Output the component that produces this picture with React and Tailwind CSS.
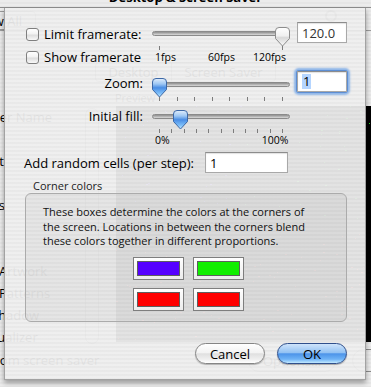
import React from 'react';

// screen saver cells seen through the sheet (deterministic pseudo random)
const cells = (() => {
  const out = [];
  let s = 7;
  const rnd = () => {
    s = (s * 16807) % 2147483647;
    return s / 2147483647;
  };
  for (let i = 0; i < 170; i++) {
    const x = Math.floor(rnd() * 255);
    const y = Math.floor(rnd() * 234);
    const top = y < 117;
    const right = x > 127;
    const color = top ? (right ? '#22dd22' : '#5522ff') : '#ee2222';
    out.push({ x, y, color, w: rnd() > 0.6 ? 2 : 1 });
  }
  return out;
})();

const tickList = (n) => Array.from({ length: n }, (_, i) => Math.round((i * 123) / (n - 1)));

const Checkbox = () => (
  <span className="block w-[13px] h-[13px] shrink-0 rounded-[3px] border border-[#7f7f7f] bg-[linear-gradient(#ffffff_0%,#f2f2f2_45%,#dddddd_55%,#f8f8f8_100%)]" />
);

const Thumb = ({ blue }) => (
  <svg width="15" height="20" viewBox="0 0 15 20" className="block">
    <defs>
      <linearGradient id={blue ? 'thumbBlue' : 'thumbGray'} x1="0" y1="0" x2="0" y2="1">
        {blue ? (
          <>
            <stop offset="0" stopColor="#e2eefc" />
            <stop offset="0.3" stopColor="#9cc6f3" />
            <stop offset="0.5" stopColor="#4a8de4" />
            <stop offset="0.8" stopColor="#7cbef9" />
            <stop offset="1" stopColor="#c8ecff" />
          </>
        ) : (
          <>
            <stop offset="0" stopColor="#ffffff" />
            <stop offset="0.45" stopColor="#f0f0f0" />
            <stop offset="0.55" stopColor="#d8d8d8" />
            <stop offset="1" stopColor="#fafafa" />
          </>
        )}
      </linearGradient>
    </defs>
    <path
      d="M0.5 4 Q0.5 0.5 4 0.5 H11 Q14.5 0.5 14.5 4 V11.5 L7.5 19 L0.5 11.5 Z"
      fill={blue ? 'url(#thumbBlue)' : 'url(#thumbGray)'}
      stroke={blue ? '#3d68a6' : '#8c8c8c'}
    />
  </svg>
);

const Slider = ({ value, ticks, blue }) => (
  <div className="relative w-[138px] h-[25px] shrink-0">
    <div className="absolute left-0 right-0 top-[5px] h-[5px] rounded-full border border-[#8a8a8a] bg-[linear-gradient(#8e8e8e,#b4b4b4_50%,#dadada)]" />
    {ticks.map((t, i) => (
      <div key={i} className="absolute top-[20px] w-px h-[4px] bg-[#7c7c7c]" style={{ left: 7 + t }} />
    ))}
    <div className="absolute top-[1px]" style={{ left: Math.round(value * 123) }}>
      <Thumb blue={blue} />
    </div>
  </div>
);

const Field = ({ children, className = '' }) => (
  <div
    className={`h-[21px] shrink-0 bg-white border border-[#a8a8a8] border-t-[#8c8c8c] shadow-[inset_0_1px_1px_rgba(0,0,0,0.12)] flex items-center pl-[4px] text-[13px] ${className}`}
  >
    {children}
  </div>
);

const Well = ({ className }) => (
  <div className="h-[23px] border border-[#7e7e7e] bg-[linear-gradient(#ffffff,#ececec)] p-[3px]">
    <div className={`h-full border border-[#5e5e5e] ${className}`} />
  </div>
);

export default function App() {
  return (
    <div className="relative w-[371px] h-[387px] overflow-hidden font-['Open_Sans',sans-serif] text-black bg-[repeating-linear-gradient(180deg,#ececec_0px,#ececec_2px,#e6e6e6_2px,#e6e6e6_4px)]">
      {/* window behind the sheet */}
      <div className="absolute inset-0 text-[13px] leading-[18px] whitespace-nowrap">
        <div className="absolute top-[-12px] left-0 right-0 text-center font-bold">Desktop &amp; Screen Saver</div>
        <div className="absolute left-0 right-0 top-[7px] h-px bg-[#8e8e8e]" />
        <div className="absolute left-0 right-0 top-[30px] h-px bg-[#9c9c9c]" />

        <div className="absolute left-[-30px] top-[11px] w-[66px] h-[19px] rounded-[4px] border border-[#9a9a9a] flex items-center justify-end pr-[13px]">
          Show All
        </div>
        <div className="absolute left-[325px] top-[10px] w-[12px] h-[12px] rounded-full border-2 border-[#777]" />

        <div className="absolute left-[95px] top-[62px] w-[181px] h-[20px] rounded-[4px] border border-[#8c8c8c] flex">
          <div className="w-[76px] border-r border-[#8c8c8c] flex items-center justify-center">Desktop</div>
          <div className="flex-1 flex items-center justify-center">Screen Saver</div>
        </div>
        <div className="absolute left-[115px] top-[89px] text-[11px]">Preview</div>

        <div className="absolute left-[116px] top-[106px] w-[300px] h-[236px] bg-black">
          {cells.map((c, i) => (
            <span
              key={i}
              className="absolute h-px"
              style={{ left: c.x, top: c.y, width: c.w, background: c.color }}
            />
          ))}
        </div>

        <div className="absolute left-[85px] top-[108px] w-[14px] h-[236px] rounded-[7px] border border-[#8a8a8a]" />
        <span className="absolute right-[319px] top-[108px]">Computer Name</span>
        <span className="absolute right-[367px] top-[152px]">Abstract</span>
        <span className="absolute right-[366px] top-[196px]">Cosmos</span>
        <span className="absolute left-[-1px] top-[262px]">Artwork</span>
        <span className="absolute left-[-1px] top-[284px]">Patterns</span>
        <span className="absolute left-[-9px] top-[306px]">Shadow</span>
        <span className="absolute left-[-20px] top-[328px]">Visualizer</span>
        <span className="absolute left-[-55px] top-[351px]">Use random screen saver</span>

        <div className="absolute left-[248px] top-[350px] w-[88px] h-[22px] rounded-full border border-[#8a8a8a] flex items-center justify-center">
          Options…
        </div>
        <div className="absolute left-[352px] top-[349px] w-[70px] h-[23px] rounded-full border border-[#8a8a8a]" />
      </div>

      {/* sheet */}
      <div className="absolute left-[4px] top-[8px] w-[362px] h-[372px] border-x border-b border-[#a2a2a2] shadow-[0_3px_5px_rgba(0,0,0,0.35)] bg-[repeating-linear-gradient(180deg,rgba(239,239,239,0.95)_0px,rgba(239,239,239,0.95)_2px,rgba(233,233,233,0.95)_2px,rgba(233,233,233,0.95)_4px)]">
        <div className="flex flex-col pl-[21px] pt-[14px] text-[13px] leading-[18px]">
          {/* limit framerate */}
          <div className="flex h-[28px] items-start">
            <div className="w-[126px] h-[24px] flex items-center gap-[5px]">
              <Checkbox />
              <span>Limit framerate:</span>
            </div>
            <div className="mt-[4px]">
              <Slider value={1} ticks={[0, 123]} />
            </div>
            <Field className="ml-[7px] w-[50px] text-[#333]">120.0</Field>
          </div>

          {/* show framerate */}
          <div className="flex h-[14px] items-center">
            <div className="w-[126px] flex items-center gap-[5px]">
              <Checkbox />
              <span>Show framerate</span>
            </div>
            <div className="flex text-[10.5px] leading-[12px]">
              <span className="ml-[3px]">1fps</span>
              <span className="ml-[32px]">60fps</span>
              <span className="ml-[18px]">120fps</span>
            </div>
          </div>

          {/* zoom */}
          <div className="flex h-[34px] items-start mt-[7px]">
            <div className="w-[126px] h-[24px] flex items-center justify-end pr-[9px]">Zoom:</div>
            <div className="mt-[6px]">
              <Slider value={0} ticks={tickList(8)} blue />
            </div>
            <div className="ml-[7px] w-[50px] rounded-[2px] shadow-[0_0_0_1px_#5d8ed3,0_0_2px_3px_#8fb6e8]">
              <Field className="w-[50px] border-[#7f9cc6]">
                <span className="bg-[#b5d5ff] px-[1px] leading-[15px]">1</span>
              </Field>
            </div>
          </div>

          {/* initial fill */}
          <div className="flex flex-col h-[41px]">
            <div className="flex h-[29px] items-start">
              <div className="w-[126px] h-[22px] flex items-center justify-end pr-[9px]">Initial fill:</div>
              <div className="mt-[4px]">
                <Slider value={0.17} ticks={tickList(11)} blue />
              </div>
            </div>
            <div className="flex h-[12px] items-center pl-[126px] text-[10.5px] leading-[12px]">
              <span className="ml-[3px]">0%</span>
              <span className="ml-[92px]">100%</span>
            </div>
          </div>

          {/* random cells */}
          <div className="flex items-center h-[21px] mt-[6px] -ml-[2px]">
            <span className="w-[181px] shrink-0">Add random cells (per step):</span>
            <Field className="w-[83px]">1</Field>
          </div>

          <div className="flex items-center h-[12px] mt-[7px] pl-[7px] text-[11px] text-[#222]">Corner colors</div>

          {/* group box */}
          <div className="mt-[1px] -ml-[1px] w-[322px] h-[129px] rounded-[6px] border border-[#ababab] bg-[rgba(0,0,0,0.04)] pt-[11px]">
            <p className="pl-[17px] text-[11px] leading-[14.5px] text-[#111]">
              These boxes determine the colors at the corners of
              <br />
              the screen. Locations in between the corners blend
              <br />
              these colors together in different proportions.
            </p>
            <div className="mt-[8px] ml-[107px] grid grid-cols-[51px_51px] gap-x-[9px] gap-y-[8px]">
              <Well className="bg-[#5500ff]" />
              <Well className="bg-[#11ee00]" />
              <Well className="bg-[#ff0000]" />
              <Well className="bg-[#ff0000]" />
            </div>
          </div>

          {/* buttons */}
          <div className="flex mt-[21px] ml-[169px] gap-[12px]">
            <button className="w-[70px] h-[21px] rounded-full border border-[#858585] bg-[linear-gradient(#ffffff_0%,#f3f3f3_45%,#e0e0e0_52%,#efefef_80%,#ffffff_100%)] shadow-[0_1px_1px_rgba(0,0,0,0.25)] text-[13px] leading-[18px]">
              Cancel
            </button>
            <button className="w-[70px] h-[21px] rounded-full border border-[#2f4f8c] bg-[linear-gradient(#cfe4fb_0%,#93c2f3_45%,#4d94e9_52%,#6fb3f6_80%,#c2e9ff_100%)] shadow-[0_1px_1px_rgba(0,0,0,0.3)] text-[13px] leading-[18px]">
              OK
            </button>
          </div>
        </div>
      </div>
    </div>
  );
}
